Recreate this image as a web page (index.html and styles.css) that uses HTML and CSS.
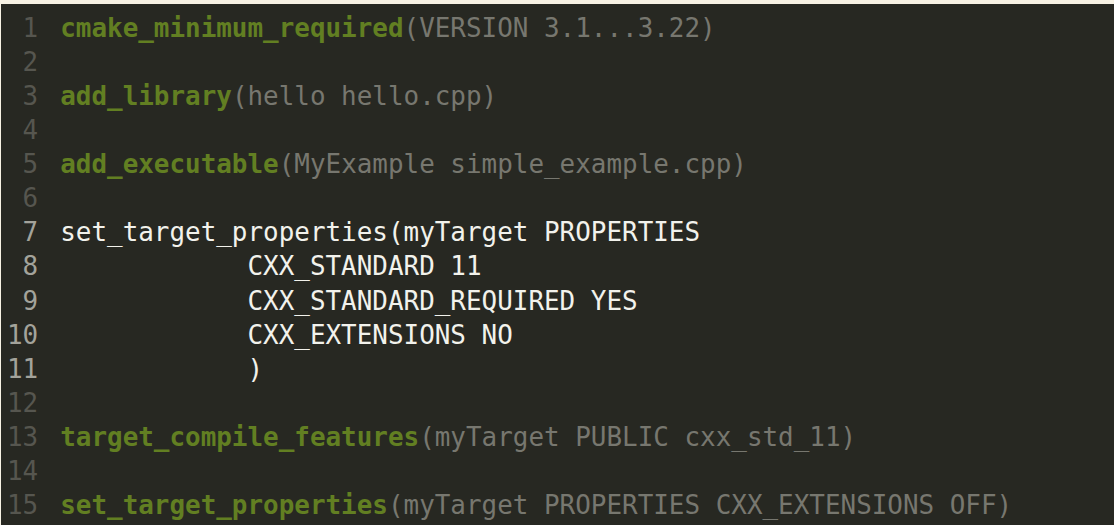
FILE: index.html
```html
<!DOCTYPE html>
<html>
<head>
<meta charset="utf-8">
<link rel="stylesheet" href="styles.css">
</head>
<body>
<div class="editor">
  <div class="line"><span class="ln">1</span><span class="code"><span class="fn">cmake_minimum_required</span><span class="arg">(VERSION 3.1...3.22)</span></span></div>
  <div class="line"><span class="ln">2</span><span class="code"></span></div>
  <div class="line"><span class="ln">3</span><span class="code"><span class="fn">add_library</span><span class="arg">(hello hello.cpp)</span></span></div>
  <div class="line"><span class="ln">4</span><span class="code"></span></div>
  <div class="line"><span class="ln">5</span><span class="code"><span class="fn">add_executable</span><span class="arg">(MyExample simple_example.cpp)</span></span></div>
  <div class="line"><span class="ln">6</span><span class="code"></span></div>
  <div class="line sel"><span class="ln">7</span><span class="code">set_target_properties(myTarget PROPERTIES</span></div>
  <div class="line sel"><span class="ln">8</span><span class="code">            CXX_STANDARD 11</span></div>
  <div class="line sel"><span class="ln">9</span><span class="code">            CXX_STANDARD_REQUIRED YES</span></div>
  <div class="line sel"><span class="ln">10</span><span class="code">            CXX_EXTENSIONS NO</span></div>
  <div class="line sel"><span class="ln">11</span><span class="code">            )</span></div>
  <div class="line"><span class="ln">12</span><span class="code"></span></div>
  <div class="line"><span class="ln">13</span><span class="code"><span class="fn">target_compile_features</span><span class="arg">(myTarget PUBLIC cxx_std_11)</span></span></div>
  <div class="line"><span class="ln">14</span><span class="code"></span></div>
  <div class="line"><span class="ln">15</span><span class="code"><span class="fn">set_target_properties</span><span class="arg">(myTarget PROPERTIES CXX_EXTENSIONS OFF)</span></span></div>
</div>
</body>
</html>
```
FILE: styles.css
```css
html, body {
  margin: 0;
  padding: 0;
  background: #f7f2e4;
  height: 100%;
  overflow: hidden;
}
.editor {
  margin: 4px 0 0 1px;
  background: #272822;
  height: calc(100% - 4px);
  padding-top: 7px;
  box-sizing: border-box;
  font-family: "DejaVu Sans Mono", "Liberation Mono", monospace;
  font-size: 25.93px;
  line-height: 34.07px;
}
.line {
  display: flex;
  height: 34.07px;
  white-space: pre;
}
.ln {
  width: 2ch;
  text-align: right;
  padding-left: 6px;
  margin-right: 22px;
  color: #56564f;
  flex: none;
}
.sel .ln {
  color: #a3a39b;
}
.code {
  color: #f2f2ec;
}
.fn {
  color: #627f22;
  font-weight: bold;
}
.arg {
  color: #77776f;
}
```
